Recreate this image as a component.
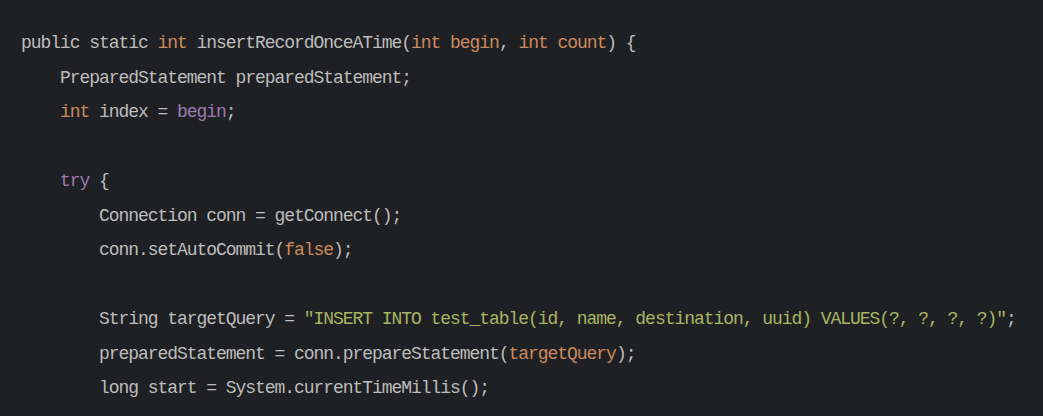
import React from "react";

type Tok = [string, string?];

const D = "text-[#bdbdbd]";
const O = "text-[#cc8a5c]";
const P = "text-[#9d7bae]";
const S = "text-[#a9b463]";

const lines: Tok[][] = [
  [["public static "], ["int", O], [" insertRecordOnceATime("], ["int begin", O], [", "], ["int count", O], [") {"]],
  [["    PreparedStatement preparedStatement;"]],
  [["    "], ["int", O], [" index = "], ["begin", P], [";"]],
  [[""]],
  [["    "], ["try", P], [" {"]],
  [["        Connection conn = getConnect();"]],
  [["        conn.setAutoCommit("], ["false", O], [");"]],
  [[""]],
  [["        String targetQuery = "], ['"INSERT INTO test_table(id, name, destination, uuid) VALUES(?, ?, ?, ?)"', S], [";"]],
  [["        preparedStatement = conn.prepareStatement("], ["targetQuery", O], [");"]],
  [["        long start = System.currentTimeMillis();"]],
];

export default function App() {
  return (
    <div className="w-[1043px] h-[416px] overflow-hidden bg-[#1f2023] pt-[26px] pl-[21px]">
      <div
        className="whitespace-pre text-[18px] tracking-[-1.05px]"
        style={{ fontFamily: '"Liberation Mono", "Courier New", monospace' }}
      >
        {lines.map((l, i) => (
          <div key={i} className="h-[34.5px] leading-[34.5px]">
            {l.map(([t, c], j) => (
              <span key={j} className={c ?? D}>
                {t}
              </span>
            ))}
            {l.length === 1 && l[0][0] === "" ? "\u00a0" : null}
          </div>
        ))}
      </div>
    </div>
  );
}
